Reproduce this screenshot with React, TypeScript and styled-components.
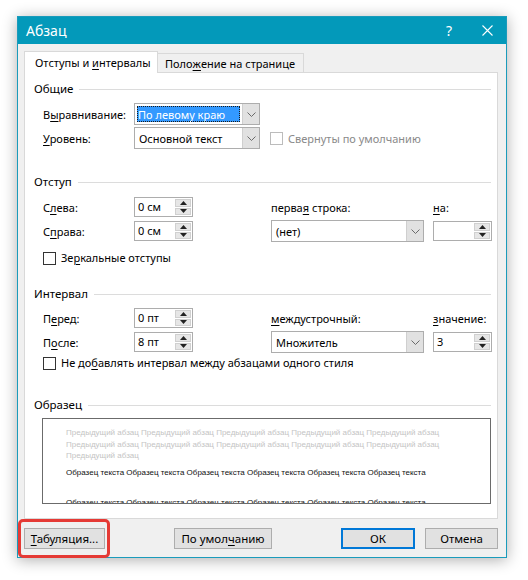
import React from "react";
import styled, { createGlobalStyle } from "styled-components";

const GlobalStyle = createGlobalStyle`
  html, body { margin: 0; padding: 0; background: #fff; }
  body {
    font-family: "Noto Sans", "Open Sans", sans-serif;
    font-size: 11px;
    color: #000;
  }
  u { text-decoration: underline; text-underline-offset: 2px; }
`;

const Page = styled.div`
  padding: 16px 0 22px 17px;
`;

const Window = styled.div`
  width: 490px;
  height: 542px;
  box-sizing: border-box;
  border: 1px solid #1a9bbb;
  background: #f0f0f0;
  box-shadow: 0 2px 14px rgba(0, 0, 0, 0.32);
  display: flex;
  flex-direction: column;
`;

const TitleBar = styled.div`
  height: 27px;
  flex: none;
  background: #0399ba;
  display: flex;
  align-items: center;
  color: #fff;
  padding-left: 8px;
`;

const TitleText = styled.div`
  font-size: 14px;
  flex: 1;
  line-height: 27px;
`;

const TitleButton = styled.div`
  width: 38px;
  height: 27px;
  display: flex;
  align-items: center;
  justify-content: center;
  font-size: 14px;
  color: #fff;
`;

const Body = styled.div`
  flex: 1;
  padding: 7px 8px 0 6px;
  display: flex;
  flex-direction: column;
`;

const TabRow = styled.div`
  display: flex;
  align-items: flex-end;
  height: 21px;
  position: relative;
  z-index: 1;
`;

const Tab = styled.div<{ $active?: boolean; $w: number }>`
  box-sizing: border-box;
  width: ${(p) => p.$w}px;
  height: ${(p) => (p.$active ? 22 : 19)}px;
  margin-bottom: ${(p) => (p.$active ? -1 : 0)}px;
  padding-left: ${(p) => (p.$active ? 10 : 7)}px;
  border: 1px solid #d9d9d9;
  border-bottom: none;
  border-left: ${(p) => (p.$active ? "1px solid #d9d9d9" : "none")};
  background: ${(p) => (p.$active ? "#fff" : "#f0f0f0")};
  display: flex;
  align-items: center;
  white-space: pre;
  font-size: 11px;
`;

const Panel = styled.div`
  box-sizing: border-box;
  height: 447px;
  border: 1px solid #d9d9d9;
  background: #fff;
  display: flex;
  flex-direction: column;
`;

const SectionHeader = styled.div<{ $top: number }>`
  display: flex;
  align-items: center;
  gap: 6px;
  margin-top: ${(p) => p.$top}px;
  padding: 0 6px 0 9px;
  line-height: 16px;
  font-size: 11.5px;
  &::after {
    content: "";
    flex: 1;
    height: 1px;
    background: #dcdcdc;
  }
`;

const FieldGrid = styled.div<{ $top: number; $cols: string }>`
  display: grid;
  grid-template-columns: ${(p) => p.$cols};
  grid-auto-rows: 22px;
  row-gap: 2px;
  margin-top: ${(p) => p.$top}px;
  padding-left: 18px;
  align-items: center;
`;

const Label = styled.span<{ $col?: number }>`
  grid-column: ${(p) => p.$col ?? 1};
  white-space: nowrap;
`;

const Combo = styled.div<{ $col: number }>`
  grid-column: ${(p) => p.$col};
  box-sizing: border-box;
  height: 22px;
  border: 1px solid #adadad;
  background: #fff;
  display: flex;
  align-items: stretch;
`;

const ComboValue = styled.div<{ $selected?: boolean }>`
  flex: 1;
  display: flex;
  align-items: center;
  margin: 2px;
  padding-left: ${(p) => (p.$selected ? 1 : 2)}px;
  background: ${(p) => (p.$selected ? "#3399ff" : "transparent")};
  color: ${(p) => (p.$selected ? "#fff" : "#000")};
  outline: ${(p) => (p.$selected ? "1px dotted #1a1a1a" : "none")};
  outline-offset: -1px;
  white-space: nowrap;
`;

const ComboArrow = styled.div`
  width: 16px;
  background: #e1e1e1;
  border-left: 1px solid #cfcfcf;
  display: flex;
  align-items: center;
  justify-content: center;
`;

const Spin = styled.div<{ $col: number }>`
  grid-column: ${(p) => p.$col};
  box-sizing: border-box;
  height: 20px;
  border: 1px solid #adadad;
  background: #fff;
  display: flex;
`;

const SpinValue = styled.div`
  flex: 1;
  padding-left: 3px;
  line-height: 18px;
  white-space: nowrap;
`;

const SpinButtons = styled.div`
  width: 17px;
  display: flex;
  flex-direction: column;
  gap: 1px;
  padding: 1px 1px 1px 0;
  box-sizing: border-box;
`;

const SpinButton = styled.div`
  flex: 1;
  background: #e6e6e6;
  border: 1px solid #d0d0d0;
  display: flex;
  align-items: center;
  justify-content: center;
`;

const CheckRow = styled.div<{ $top: number }>`
  display: flex;
  align-items: center;
  gap: 5px;
  margin-top: ${(p) => p.$top}px;
  padding-left: 18px;
  line-height: 16px;
  white-space: nowrap;
`;

const InlineCheck = styled.div<{ $col: number }>`
  grid-column: ${(p) => p.$col};
  display: flex;
  align-items: center;
  gap: 5px;
  color: #8a8a8a;
  white-space: nowrap;
`;

const CheckBox = styled.span<{ $disabled?: boolean }>`
  width: 13px;
  height: 13px;
  box-sizing: border-box;
  border: 1px solid ${(p) => (p.$disabled ? "#bcbcbc" : "#333")};
  background: #fff;
  flex: none;
`;

const SampleBox = styled.div`
  box-sizing: border-box;
  height: 86px;
  margin: 5px 6px 0 17px;
  border: 1px solid #6b6b6b;
  background: #fff;
  overflow: hidden;
  padding: 8px 44px 0 23px;
  font-family: "Liberation Sans", Arial, sans-serif;
  font-size: 8px;
`;

const PrevPara = styled.div`
  color: #c4c4c4;
  line-height: 11.5px;
`;

const SamplePara = styled.div`
  color: #111;
  line-height: 30px;
  margin-top: -4px;
`;

const ButtonRow = styled.div`
  display: flex;
  margin-top: 9px;
`;

const Button = styled.div<{ $w: number; $left?: number; $primary?: boolean }>`
  box-sizing: border-box;
  width: ${(p) => p.$w}px;
  height: 21px;
  margin-left: ${(p) => (p.$left === undefined ? 0 : `${p.$left}px`)};
  background: #e1e1e1;
  border: ${(p) => (p.$primary ? "2px solid #0078d7" : "1px solid #adadad")};
  display: flex;
  align-items: center;
  justify-content: center;
  white-space: nowrap;
  font-size: 11.5px;
`;

const PushRight = styled.div`
  flex: 1;
`;

const Highlight = styled.div`
  position: relative;
  &::after {
    content: "";
    position: absolute;
    left: -6px;
    right: -5px;
    top: -9px;
    bottom: -9px;
    border: 3px solid #e53a35;
    border-radius: 5px;
    pointer-events: none;
  }
`;

const Chevron = () => (
  <svg width="9" height="5" viewBox="0 0 9 5">
    <polyline points="0.5,0.5 4.5,4.5 8.5,0.5" fill="none" stroke="#6a6a6a" strokeWidth="1" />
  </svg>
);

const ArrowUp = () => (
  <svg width="7" height="4" viewBox="0 0 7 4">
    <polygon points="0,4 7,4 3.5,0" fill="#222" />
  </svg>
);

const ArrowDown = () => (
  <svg width="7" height="4" viewBox="0 0 7 4">
    <polygon points="0,0 7,0 3.5,4" fill="#222" />
  </svg>
);

const CloseIcon = () => (
  <svg width="11" height="11" viewBox="0 0 11 11">
    <path d="M0.5 0.5 L10.5 10.5 M10.5 0.5 L0.5 10.5" stroke="#fff" strokeWidth="1.1" />
  </svg>
);

const ComboField = ({ col, value, selected }: { col: number; value: string; selected?: boolean }) => (
  <Combo $col={col}>
    <ComboValue $selected={selected}>{value}</ComboValue>
    <ComboArrow>
      <Chevron />
    </ComboArrow>
  </Combo>
);

const SpinField = ({ col, value }: { col: number; value: string }) => (
  <Spin $col={col}>
    <SpinValue>{value}</SpinValue>
    <SpinButtons>
      <SpinButton>
        <ArrowUp />
      </SpinButton>
      <SpinButton>
        <ArrowDown />
      </SpinButton>
    </SpinButtons>
  </Spin>
);

const COLS = "91px 59px 78px 153px 9px 59px";

export default function App() {
  const prev = Array(11).fill("Предыдущий абзац").join(" ");
  const sample = Array(12).fill("Образец текста").join(" ");
  return (
    <>
      <GlobalStyle />
      <Page>
        <Window>
          <TitleBar>
            <TitleText>Абзац</TitleText>
            <TitleButton>?</TitleButton>
            <TitleButton>
              <CloseIcon />
            </TitleButton>
          </TitleBar>
          <Body>
            <TabRow>
              <Tab $active $w={134}>
                {"Отступы и "}
                <u>и</u>
                {"нтервалы"}
              </Tab>
              <Tab $w={146}>
                {"Поло"}
                <u>ж</u>
                {"ение на странице"}
              </Tab>
            </TabRow>
            <Panel>
              <SectionHeader $top={8}>Общие</SectionHeader>
              <FieldGrid $top={6} $cols="91px 126px 10px auto">
                <Label>
                  В<u>ы</u>равнивание:
                </Label>
                <ComboField col={2} value="По левому краю" selected />
                <Label>
                  <u>У</u>ровень:
                </Label>
                <ComboField col={2} value="Основной текст" />
                <InlineCheck $col={4}>
                  <CheckBox $disabled />
                  Свернуты по умолчанию
                </InlineCheck>
              </FieldGrid>

              <SectionHeader $top={25}>Отступ</SectionHeader>
              <FieldGrid $top={6} $cols={COLS}>
                <Label>
                  С<u>л</u>ева:
                </Label>
                <SpinField col={2} value="0 см" />
                <Label $col={4}>
                  перва<u>я</u> строка:
                </Label>
                <Label $col={6}>
                  <u>н</u>а:
                </Label>
                <Label>
                  С<u>п</u>рава:
                </Label>
                <SpinField col={2} value="0 см" />
                <ComboField col={4} value="(нет)" />
                <SpinField col={6} value="" />
              </FieldGrid>
              <CheckRow $top={8}>
                <CheckBox />
                <span>
                  Зе<u>р</u>кальные отступы
                </span>
              </CheckRow>

              <SectionHeader $top={20}>Интервал</SectionHeader>
              <FieldGrid $top={5} $cols={COLS}>
                <Label>
                  П<u>е</u>ред:
                </Label>
                <SpinField col={2} value="0 пт" />
                <Label $col={4}>
                  <u>м</u>еждустрочный:
                </Label>
                <Label $col={6}>
                  <u>з</u>начение:
                </Label>
                <Label>
                  П<u>о</u>сле:
                </Label>
                <SpinField col={2} value="8 пт" />
                <ComboField col={4} value="Множитель" />
                <SpinField col={6} value="3" />
              </FieldGrid>
              <CheckRow $top={2}>
                <CheckBox />
                <span>
                  Не до<u>б</u>авлять интервал между абзацами одного стиля
                </span>
              </CheckRow>

              <SectionHeader $top={26}>Образец</SectionHeader>
              <SampleBox>
                <PrevPara>{prev}</PrevPara>
                <SamplePara>{sample}</SamplePara>
              </SampleBox>
            </Panel>
            <ButtonRow>
              <Highlight>
                <Button $w={81}>
                  <span>
                    <u>Т</u>абуляция...
                  </span>
                </Button>
              </Highlight>
              <Button $w={98} $left={69}>
                <span>
                  По умол<u>ч</u>анию
                </span>
              </Button>
              <PushRight />
              <Button $w={74} $primary>
                ОК
              </Button>
              <Button $w={73} $left={10}>
                Отмена
              </Button>
            </ButtonRow>
          </Body>
        </Window>
      </Page>
    </>
  );
}
